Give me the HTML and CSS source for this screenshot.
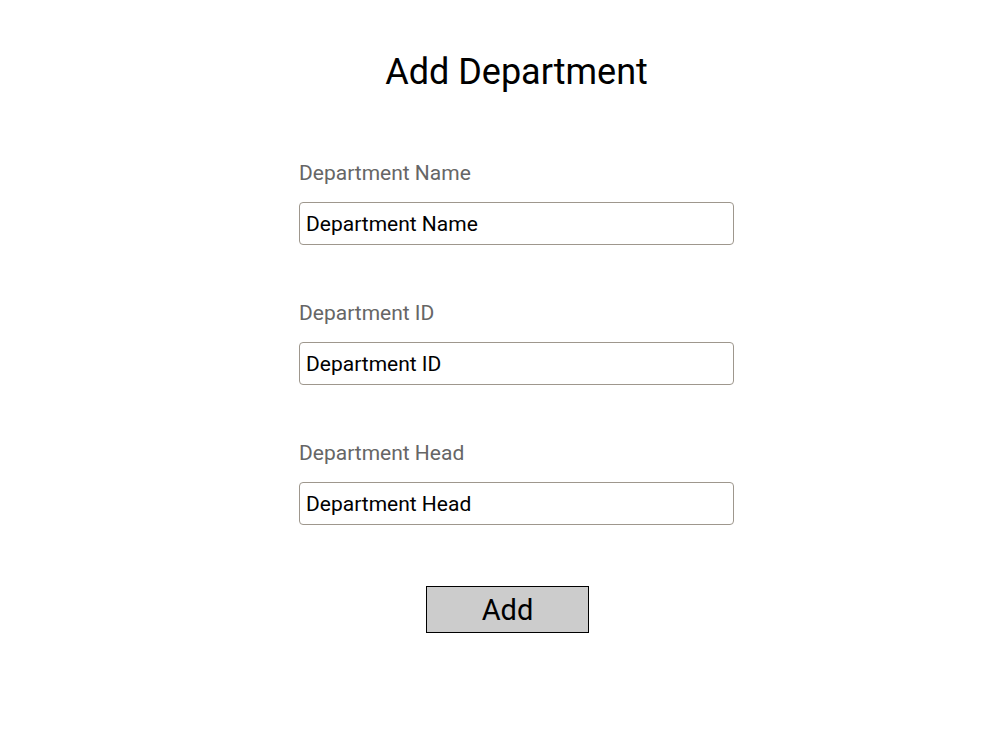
FILE: index.html
```html
<!DOCTYPE html>
<html>
<head>
<meta charset="utf-8">
<link rel="stylesheet" href="styles.css">
</head>
<body>
<main class="page">
  <h1 class="title">Add Department</h1>
  <form class="form">
    <div class="field">
      <label class="label">Department Name</label>
      <input class="input" type="text" value="Department Name">
    </div>
    <div class="field">
      <label class="label">Department ID</label>
      <input class="input" type="text" value="Department ID">
    </div>
    <div class="field">
      <label class="label">Department Head</label>
      <input class="input" type="text" value="Department Head">
    </div>
    <div class="actions">
      <button class="btn" type="button">Add</button>
    </div>
  </form>
</main>
</body>
</html>
```

FILE: styles.css
```css
html, body {
  margin: 0;
  padding: 0;
  background: #fff;
}
body {
  font-family: Roboto, "Liberation Sans", sans-serif;
  color: #000;
}
.page {
  width: 435px;
  margin-left: 299px;
  padding-top: 50px;
}
.title {
  margin: 0;
  font-size: 36px;
  font-weight: 400;
  line-height: 44px;
  text-align: center;
}
.form {
  margin-top: 65px;
  display: flex;
  flex-direction: column;
}
.field {
  display: flex;
  flex-direction: column;
  margin-bottom: 54px;
}
.label {
  font-size: 21px;
  line-height: 28px;
  color: #666;
  margin-bottom: 15px;
}
.input {
  box-sizing: border-box;
  width: 435px;
  height: 43px;
  border: 1px solid #9e978d;
  border-radius: 4px;
  padding: 0 6px;
  font-family: Roboto, "Liberation Sans", sans-serif;
  font-size: 21px;
  color: #000;
  background: #fff;
  outline: none;
}
.actions {
  display: flex;
  padding-left: 127px;
  margin-top: 7px;
}
.btn {
  box-sizing: border-box;
  width: 163px;
  height: 47px;
  background: #ccc;
  border: 1px solid #000;
  border-radius: 0;
  font-family: Roboto, "Liberation Sans", sans-serif;
  font-size: 29px;
  color: #000;
  padding: 0;
}
```
